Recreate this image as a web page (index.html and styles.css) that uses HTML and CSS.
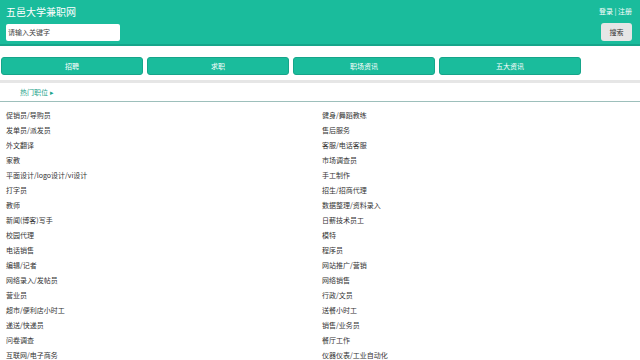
FILE: index.html
```html
<!DOCTYPE html>
<html lang="zh">
<head>
<meta charset="utf-8">
<title>五邑大学兼职网</title>
<link rel="stylesheet" href="styles.css">
</head>
<body>
<header class="top">
  <div class="top-row">
    <div class="brand">五邑大学兼职网</div>
    <div class="auth"><a href="#">登录</a> | <a href="#">注册</a></div>
  </div>
  <div class="search-row">
    <input class="search-input" type="text" placeholder="请输入关键字">
    <button class="search-btn">搜索</button>
  </div>
</header>
<nav class="nav">
  <a class="nav-btn" href="#">招聘</a>
  <a class="nav-btn" href="#">求职</a>
  <a class="nav-btn" href="#">职场资讯</a>
  <a class="nav-btn" href="#">五大资讯</a>
</nav>
<div class="hot"><span class="hot-title">热门职位 ▸</span></div>
<ul class="jobs">
  <li>促销员/导购员</li><li>健身/舞蹈教练</li>
  <li>发单员/派发员</li><li>售后服务</li>
  <li>外文翻译</li><li>客服/电话客服</li>
  <li>家教</li><li>市场调查员</li>
  <li>平面设计/logo设计/vi设计</li><li>手工制作</li>
  <li>打字员</li><li>招生/招商代理</li>
  <li>教师</li><li>数据整理/资料录入</li>
  <li>新闻(博客)写手</li><li>日薪技术员工</li>
  <li>校园代理</li><li>模特</li>
  <li>电话销售</li><li>程序员</li>
  <li>编辑/记者</li><li>网站推广/营销</li>
  <li>网络录入/发帖员</li><li>网络销售</li>
  <li>营业员</li><li>行政/文员</li>
  <li>超市/便利店小时工</li><li>送餐小时工</li>
  <li>递送/快递员</li><li>销售/业务员</li>
  <li>问卷调查</li><li>餐厅工作</li>
  <li>互联网/电子商务</li><li>仪器仪表/工业自动化</li>
</ul>
</body>
</html>
```

FILE: styles.css
```css
* { box-sizing: border-box; }
body {
  margin: 0;
  font-family: "Noto Sans CJK SC", "Noto Sans", sans-serif;
  background: #fff;
  color: #333;
}
.top {
  background: #1abc9c;
  height: 46px;
  border-bottom: 2px solid #16a58a;
  padding: 4px 8px 0 6px;
}
.top-row {
  display: flex;
  justify-content: space-between;
  align-items: center;
  height: 15px;
}
.brand {
  color: #fff;
  font-size: 10px;
  line-height: 15px;
}
.auth {
  color: #fff;
  font-size: 7px;
  line-height: 15px;
}
.auth a { color: #fff; text-decoration: none; }
.search-row {
  display: flex;
  justify-content: space-between;
  align-items: center;
  margin-top: 4px;
}
.search-input {
  width: 114px;
  height: 17px;
  border: none;
  border-radius: 2px;
  padding: 0 2px;
  font-family: inherit;
  font-size: 7px;
  background: #fff;
  outline: none;
}
.search-input::placeholder { color: #444; }
.search-btn {
  width: 31px;
  height: 18px;
  border: none;
  border-radius: 3px;
  background: #e6e6e6;
  color: #333;
  font-family: inherit;
  font-size: 7px;
  padding: 0;
}
.nav {
  display: flex;
  gap: 4px;
  padding: 11px 59px 5px 1px;
  border-bottom: 3px solid #e6e6e6;
}
.nav-btn {
  flex: 1;
  height: 18px;
  line-height: 16px;
  text-align: center;
  background: #1abc9c;
  border: 1px solid #16a58a;
  border-radius: 3px;
  color: #fff;
  font-size: 7px;
  text-decoration: none;
}
.hot {
  height: 19px;
  font-size: 7px;
  line-height: 18px;
  padding-left: 20px;
  border-bottom: 1px solid #9dbfbb;
}
.hot-title {
  color: #1aa38a;
}
.jobs {
  list-style: none;
  margin: 0;
  padding: 6px 0 0 6px;
  display: grid;
  grid-template-columns: 316px 1fr;
}
.jobs li {
  font-size: 7px;
  line-height: 15px;
  height: 15px;
  color: #333;
}
```
